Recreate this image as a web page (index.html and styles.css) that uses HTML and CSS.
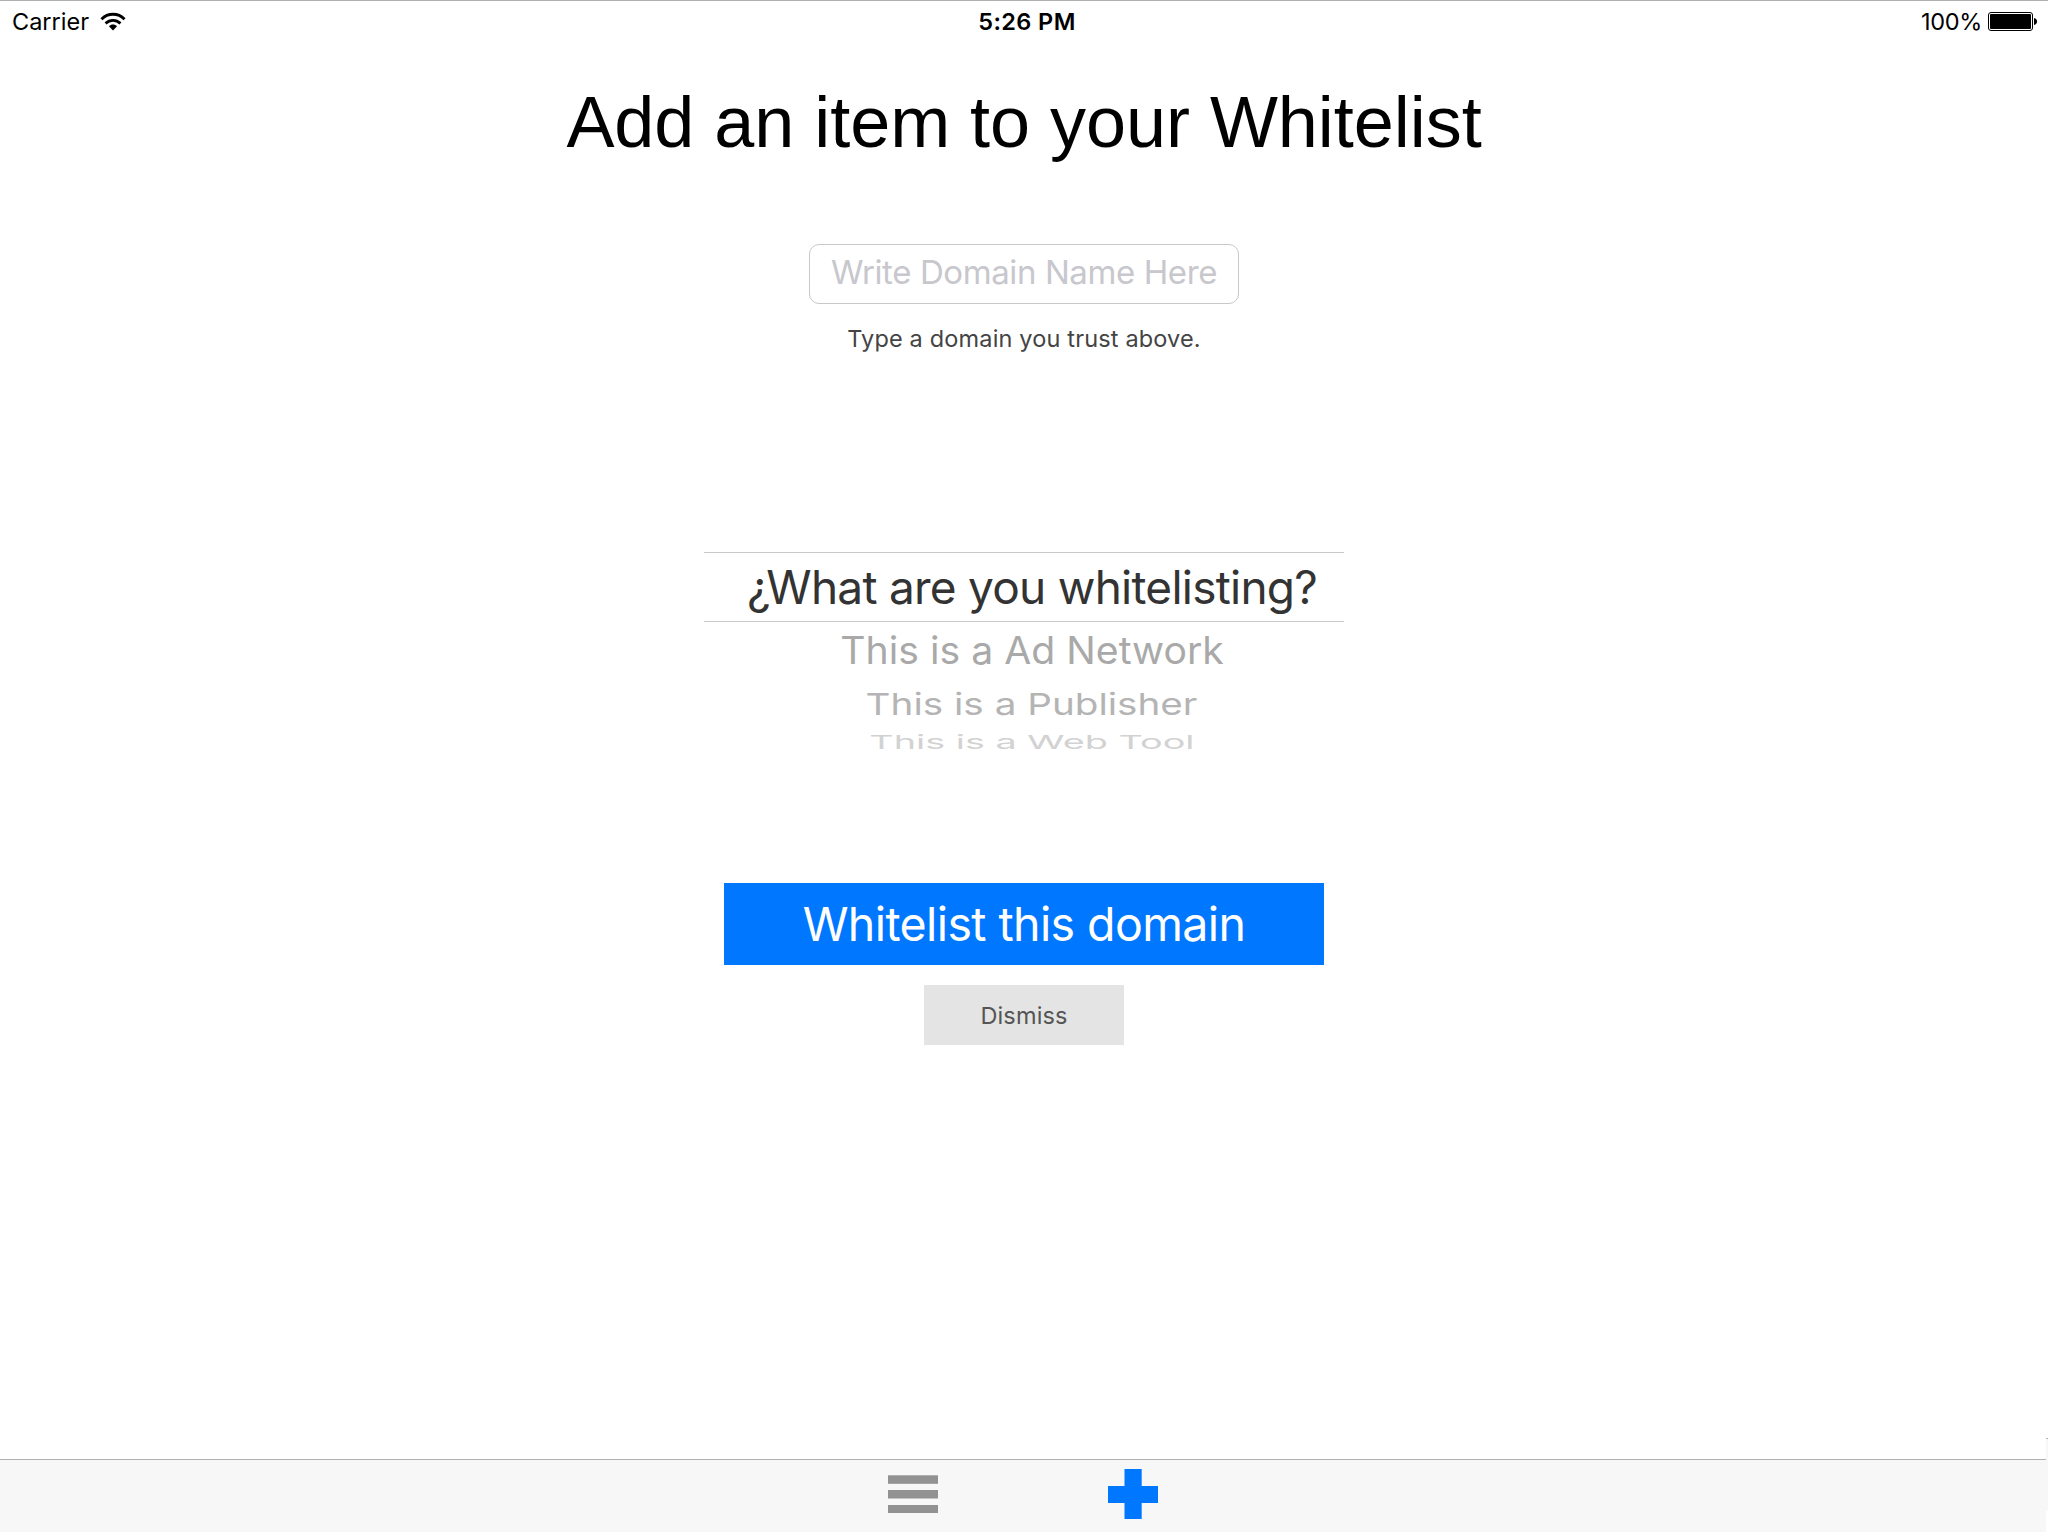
FILE: index.html
```
<!DOCTYPE html>
<html lang="en">
  <head>
    <meta charset="utf-8">
    <title>Add to Whitelist</title>
    <link rel="stylesheet" href="styles.css">
  </head>
  <body>
    <header class="status-bar">
      <div class="status-left">
        <span class="carrier">Carrier</span>
        <svg class="wifi" width="26" height="19" viewBox="0 0 26 19">
          <path d="M1.5 7.2C8 .7 18 .7 24.5 7.2" fill="none" stroke="#000" stroke-width="3"/>
          <path d="M5.5 11.4C10 7.3 16 7.3 20.5 11.4" fill="none" stroke="#000" stroke-width="2.8"/>
          <path d="M9 14.3C11 12 15 12 17 14.3L13 18.4Z"/>
        </svg>
      </div>
      <span class="time">5:26 PM</span>
      <div class="status-right">
        <span class="percent">100%</span>
        <svg class="battery" width="50" height="20" viewBox="0 0 50 20">
          <rect x=".5" y=".5" width="44" height="18" rx="2.5" fill="none" stroke="#000"/>
          <rect x="2" y="2" width="41" height="15" rx="1"/>
          <path d="M46 6C50 6.5 50 12.5 46 13Z"/>
        </svg>
      </div>
    </header>

    <main>
      <h1>Add an item to your Whitelist</h1>
      <form class="whitelist-form">
        <input type="text" class="domain" placeholder="Write Domain Name Here">
        <p class="hint">Type a domain you trust above.</p>

        <ul class="picker">
          <li class="selected"><span>¿What are you whitelisting?</span></li>
          <li class="near"><span>This is a Ad Network</span></li>
          <li class="mid"><span>This is a Publisher</span></li>
          <li class="far"><span>This is a Web Tool</span></li>
        </ul>

        <button type="button" class="submit">Whitelist this domain</button>
        <button type="button" class="dismiss">Dismiss</button>
      </form>
    </main>

    <div class="side-edge"></div>

    <nav class="tab-bar">
      <svg width="50" height="50" viewBox="0 0 50 50" fill="#929292">
        <rect y="6.3" width="50" height="8.5"/>
        <rect y="21" width="50" height="8.5"/>
        <rect y="36" width="50" height="8"/>
      </svg>
      <svg width="50" height="50" viewBox="0 0 50 50">
        <path d="M16.5 0H33.7V17H50V34H33.7V50H16.5V34H0V17H16.5Z" fill="#0077ff"/>
      </svg>
    </nav>
  </body>
</html>
```

FILE: styles.css
```
* {
  box-sizing: border-box;
  margin: 0;
  padding: 0;
}

body {
  position: relative;
  display: flex;
  flex-direction: column;
  width: 2048px;
  height: 1536px;
  padding-bottom: 4px;
  overflow: hidden;
  border-top: 1px solid #b0b0b0;
  background-color: #fff;
  font-family: Inter, sans-serif;
}

.status-bar {
  display: grid;
  grid-template-columns: 1fr auto 1fr;
  height: 40px;
  padding: 0 10px 0 12px;
  font-size: 23.5px;
  line-height: 41px;
}

.status-left,
.status-right {
  display: flex;
}

.status-right {
  justify-content: flex-end;
}

.wifi {
  margin: 11px 0 0 11px;
}

.percent {
  letter-spacing: -0.3px;
}

.battery {
  margin: 11px 0 0 6px;
}

.time {
  padding-left: 4px;
  font-weight: 600;
  letter-spacing: 0.4px;
}

main {
  flex: 1;
  display: flex;
  flex-direction: column;
  align-items: center;
}

h1 {
  margin-top: 41px;
  font-family: "Liberation Sans", sans-serif;
  font-size: 72px;
  font-weight: 400;
  letter-spacing: -0.04px;
  line-height: 80px;
}

.whitelist-form {
  display: flex;
  flex-direction: column;
  align-items: center;
  padding-top: 82px;
}

.domain {
  width: 430px;
  height: 60px;
  padding-bottom: 4px;
  border: 1px solid #c8c8cb;
  border-radius: 10px;
  font-family: inherit;
  font-size: 33px;
  letter-spacing: -0.4px;
  text-align: center;
}

.domain::placeholder {
  color: #c7c7cd;
}

.hint {
  margin-top: 19px;
  color: #444;
  font-size: 23.5px;
  letter-spacing: 0.16px;
  line-height: 32px;
}

.picker {
  width: 640px;
  height: 331px;
  margin-top: 197px;
  list-style: none;
  text-align: center;
}

.picker li {
  display: flex;
  justify-content: center;
  align-items: center;
  padding-left: 16px;
  font-size: 46px;
  white-space: nowrap;
}

.picker .selected {
  height: 70px;
  border-top: 1px solid #c8c8c8;
  border-bottom: 1px solid #c8c8c8;
  color: #333;
  letter-spacing: -0.75px;
}

/* rows shrink and fade as the wheel turns away */
.picker .near {
  height: 56px;
  color: #a9a9a9;
}

.near span {
  transform: scale(.852, .82);
}

.picker .mid {
  height: 51px;
  color: #b4b4b4;
}

.mid span {
  transform: scale(.84, .65);
}

.picker .far {
  height: 25px;
  color: #d2d2d2;
}

.far span {
  transform: scale(.822, .42);
}

button {
  border: none;
  font-family: inherit;
}

.submit {
  width: 600px;
  height: 82px;
  background-color: #0077ff;
  color: #fff;
  font-size: 46.5px;
  letter-spacing: -0.6px;
}

.dismiss {
  width: 200px;
  height: 60px;
  margin-top: 20px;
  background-color: #e4e4e4;
  color: #555;
  font-size: 23.5px;
  letter-spacing: 0.15px;
}

.tab-bar {
  display: flex;
  justify-content: center;
  gap: 170px;
  width: 2046px;
  height: 73px;
  padding-top: 9px;
  border-top: 1px solid #b0b0b0;
  background-color: #f7f7f7;
}

/* sliver of the next screen at the right edge */
.side-edge {
  position: absolute;
  top: 1437px;
  right: 0;
  width: 2px;
  height: 73px;
  border-top: 1px solid #b0b0b0;
  background-color: #f7f7f7;
}
```
